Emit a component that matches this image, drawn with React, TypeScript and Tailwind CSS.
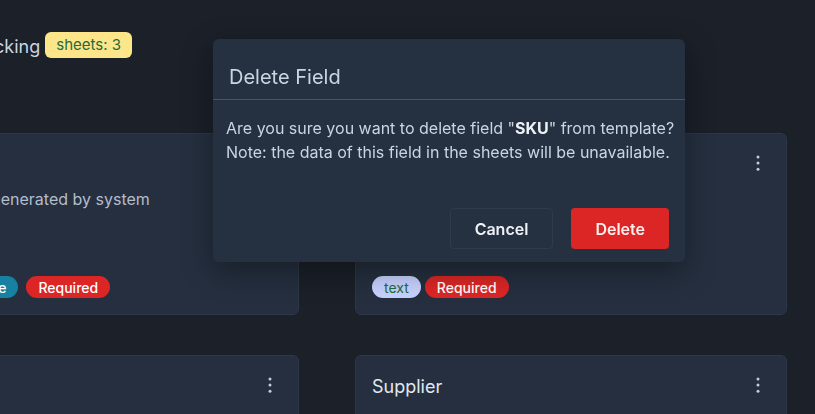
import { ReactNode } from 'react'

type Tag = { label: string; className: string }

type Field = {
  name: string
  description?: ReactNode
  tags: Tag[]
}

const fields: Field[] = [
  {
    name: 'ID',
    description: (
      <>
        <p>Automatically generated by system</p>
        <p>Value is unique</p>
      </>
    ),
    tags: [
      { label: 'text', className: 'bg-[#c7d2fe] text-[#1f6b3a]' },
      { label: 'Unique', className: 'ml-[10px] bg-[#1681a0] text-white font-medium' },
      { label: 'Required', className: 'ml-1 bg-[#dc2626] text-white font-medium' },
    ],
  },
  {
    name: 'SKU',
    description: <p>Stock keeping unit of the product</p>,
    tags: [
      { label: 'text', className: 'bg-[#c7d2fe] text-[#1f6b3a]' },
      { label: 'Required', className: 'bg-[#dc2626] text-white font-medium' },
    ],
  },
  { name: 'Quantity', tags: [] },
  { name: 'Supplier', tags: [] },
]

function Kebab() {
  return (
    <button type="button" className="flex h-6 w-6 items-center justify-center text-[#c3cbd8]">
      <svg width="6" height="18" viewBox="0 0 6 18" fill="currentColor">
        <circle cx="3" cy="3" r="1.5" />
        <circle cx="3" cy="9" r="1.5" />
        <circle cx="3" cy="15.2" r="1.5" />
      </svg>
    </button>
  )
}

function FieldCard({ field }: { field: Field }) {
  return (
    <div className="flex h-[182px] flex-col rounded-md border border-[#2c3747] bg-[#252f3f] p-4">
      <div className="flex h-[26px] items-center justify-between">
        <h3 className="pt-1 text-[18px] leading-[26px] text-[#e2e8f0]">{field.name}</h3>
        <Kebab />
      </div>
      {field.description && (
        <div className="mt-[11px] text-[16px] leading-6 text-[#b3bdcb]">{field.description}</div>
      )}
      {field.tags.length > 0 && (
        <div className="mt-auto flex gap-1">
          {field.tags.map((tag) => (
            <span
              key={tag.label}
              className={`flex h-[22px] items-center rounded-full px-3 text-[14px] ${tag.className}`}
            >
              {tag.label}
            </span>
          ))}
        </div>
      )}
    </div>
  )
}

export default function App() {
  return (
    <div className="relative min-h-screen overflow-hidden bg-[#1b2029] font-['Inter',sans-serif]">
      <div className="ml-[-133px] w-[920px] pt-8">
        {/* Header */}
        <div className="flex h-[26px] w-[265px] items-center justify-end gap-[5px]">
          <h1 className="pt-[2px] text-[18px] text-[#cbd5e1]">Stock Tracking</h1>
          <span className="flex h-[26px] items-center rounded-md bg-[#fde68a] px-[11px] text-[15px] text-[#1f6b3a]">
            sheets: 3
          </span>
        </div>

        {/* Field cards */}
        <div className="mt-[75px] grid grid-cols-[432px_432px] gap-x-[56px] gap-y-10">
          {fields.map((field) => (
            <FieldCard key={field.name} field={field} />
          ))}
        </div>
      </div>

      {/* Delete dialog */}
      <div className="fixed left-[213px] top-[39px] w-[472px] rounded-md bg-[#253041] shadow-[0_10px_30px_rgba(0,0,0,0.35)]">
        <div className="px-4 pb-2 pt-6">
          <h2 className="text-[20px] leading-7 text-[#cbd5e1]">Delete Field</h2>
        </div>
        <div className="border-t border-[#475366]" />
        <div className="pl-[13px] pr-1 pt-[16px] text-[16px] leading-6 text-[#cbd5e1]">
          <p>
            Are you sure you want to delete field "<b className="font-bold text-[#eef2f7]">SKU</b>" from template?
          </p>
          <p>Note: the data of this field in the sheets will be unavailable.</p>
        </div>
        <div className="flex justify-end gap-[18px] px-4 pb-[13px] pt-[44px]">
          <button
            type="button"
            className="h-[41px] rounded border border-[#2f3a4b] px-6 text-[16px] font-semibold text-[#eef2f7]"
          >
            Cancel
          </button>
          <button
            type="button"
            className="h-[41px] rounded bg-[#dc2626] px-6 text-[16px] font-semibold text-[#fdeeee]"
          >
            Delete
          </button>
        </div>
      </div>
    </div>
  )
}
